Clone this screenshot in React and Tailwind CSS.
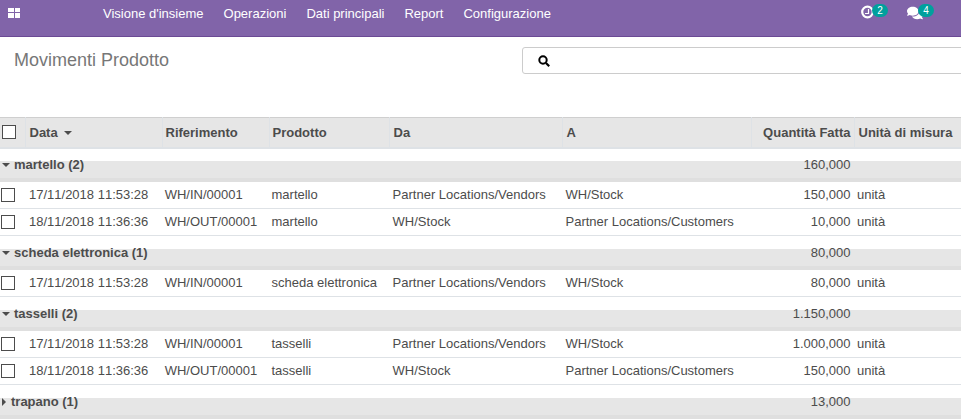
import { FaComments } from 'react-icons/fa'

const menu = ["Visione d'insieme", 'Operazioni', 'Dati principali', 'Report', 'Configurazione']

const widths = [25, 137, 107, 120, 173, 189, 103, 107]

const groups = [
    {
        name: 'martello (2)',
        total: '160,000',
        open: true,
        rows: [
            ['17/11/2018 11:53:28', 'WH/IN/00001', 'martello', 'Partner Locations/Vendors', 'WH/Stock', '150,000'],
            ['18/11/2018 11:36:36', 'WH/OUT/00001', 'martello', 'WH/Stock', 'Partner Locations/Customers', '10,000'],
        ],
    },
    {
        name: 'scheda elettronica (1)',
        total: '80,000',
        open: true,
        rows: [
            ['17/11/2018 11:53:28', 'WH/IN/00001', 'scheda elettronica', 'Partner Locations/Vendors', 'WH/Stock', '80,000'],
        ],
    },
    {
        name: 'tasselli (2)',
        total: '1.150,000',
        open: true,
        rows: [
            ['17/11/2018 11:53:28', 'WH/IN/00001', 'tasselli', 'Partner Locations/Vendors', 'WH/Stock', '1.000,000'],
            ['18/11/2018 11:36:36', 'WH/OUT/00001', 'tasselli', 'WH/Stock', 'Partner Locations/Customers', '150,000'],
        ],
    },
    { name: 'trapano (1)', total: '13,000', open: false, rows: [] },
]

function Box() {
    return <span className="block h-[14px] w-[14px] border border-[#4c4c4c] bg-white" />
}

function GroupRow({ group }) {
    return (
        <tr className="h-[34px] bg-[linear-gradient(to_bottom,#fff_13px,#e6e6e6_13px,#e6e6e6_30px,#dfdfdf_30px)]">
            <td colSpan={6} className="p-0 font-bold">
                <div className="flex items-center">
                    {group.open ? (
                        <span className="ml-[2px] mr-[4px] h-0 w-0 border-x-[4px] border-t-[4px] border-x-transparent border-t-[#4c4c4c]" />
                    ) : (
                        <span className="ml-[2px] mr-[5px] h-0 w-0 border-y-[4px] border-l-[4px] border-y-transparent border-l-[#4c4c4c]" />
                    )}
                    {group.name}
                </div>
            </td>
            <td className="p-0 pr-[3.5px] text-right">{group.total}</td>
            <td className="p-0" />
        </tr>
    )
}

function MoveRow({ row }) {
    return (
        <tr className="h-[27px] border-b border-[#dee2e6]">
            <td className="p-0 pl-[1px]">
                <Box />
            </td>
            <td className="p-0 pl-[4px] [font-kerning:none]">{row[0]}</td>
            <td className="p-0 pl-[2.7px]">{row[1]}</td>
            <td className="p-0 pl-[2.5px]">{row[2]}</td>
            <td className="p-0 pl-[3.6px]">{row[3]}</td>
            <td className="p-0 pl-[3.5px]">{row[4]}</td>
            <td className="p-0 pr-[3.5px] text-right">{row[5]}</td>
            <td className="p-0 pl-[3px]">unità</td>
        </tr>
    )
}

function GroupBlock({ group }) {
    return (
        <>
            <GroupRow group={group} />
            {group.rows.map((row, i) => (
                <MoveRow key={i} row={row} />
            ))}
        </>
    )
}

function Badge({ children }) {
    return (
        <span className="absolute left-[11px] top-[4px] flex h-[13px] w-[16px] items-center justify-center rounded-full bg-[#00a09d] text-[10px]">
            {children}
        </span>
    )
}

export default function App() {
    return (
        <div className="h-[419px] w-[961px] overflow-hidden bg-white font-['Liberation_Sans',sans-serif] text-[13px] text-[#4c4c4c]">
            <nav className="flex h-[37px] items-start border-b border-[#6b4a94] bg-[#8164a9] text-white">
                <div className="ml-[8px] mt-[8px] grid w-[12px] grid-cols-2 gap-[1px]">
                    <span className="h-[4px] bg-white" />
                    <span className="h-[4px] bg-white" />
                    <span className="h-[5px] bg-white" />
                    <span className="h-[5px] bg-white" />
                </div>
                <div className="ml-[83px] mt-[4px] flex gap-[20px]">
                    {menu.map((item) => (
                        <span key={item}>{item}</span>
                    ))}
                </div>
                <div className="relative ml-[310px] h-[36px] w-[16px]">
                    <svg viewBox="0 0 14 14" className="mt-[5px] h-[14px] w-[14px]" fill="none" stroke="white" strokeWidth="2.2">
                        <circle cx="6.5" cy="7" r="5.3" />
                        <path d="M7.5 4v4.5H4" strokeWidth="1.2" />
                    </svg>
                    <Badge>2</Badge>
                </div>
                <div className="relative ml-[30px] h-[36px] w-[16px]">
                    <FaComments size={16} className="mt-[5px]" />
                    <Badge>4</Badge>
                </div>
            </nav>
            <div className="flex h-[80px] items-start bg-white">
                <h1 className="ml-[14px] mt-[12px] shrink-0 text-[18px] leading-[22px] font-normal text-[#777]">
                    Movimenti Prodotto
                </h1>
                <div className="ml-[353px] mt-[10px] flex h-[27px] w-[500px] shrink-0 items-center rounded-[3px] border border-[#ccc] pl-[15px]">
                    <svg viewBox="0 0 12 12" className="h-[12px] w-[12px]" fill="none" stroke="black">
                        <circle cx="5" cy="5" r="3.7" strokeWidth="2" />
                        <path d="M8 8l3.2 3.2" strokeWidth="2.2" />
                    </svg>
                </div>
            </div>
            <table className="w-[961px] table-fixed border-collapse">
                <colgroup>
                    {widths.map((w, i) => (
                        <col key={i} style={{ width: w }} />
                    ))}
                </colgroup>
                <thead>
                    <tr className="h-[30px] border-t border-b-2 border-t-[#cfcfcf] border-b-[#dee2e6] bg-[#e6e6e6] text-left font-bold">
                        <th className="border-r border-[#dee2e6] p-0 pl-[2px]">
                            <Box />
                        </th>
                        <th className="border-r border-[#dee2e6] p-0 pl-[4px]">
                            Data
                            <span className="ml-[6px] inline-block border-x-[4px] border-t-[4px] border-x-transparent border-t-[#4c4c4c] align-middle" />
                        </th>
                        <th className="border-r border-[#dee2e6] p-0 pl-[3px]">Riferimento</th>
                        <th className="border-r border-[#dee2e6] p-0 pl-[3px]">Prodotto</th>
                        <th className="border-r border-[#dee2e6] p-0 pl-[4px]">Da</th>
                        <th className="border-r border-[#dee2e6] p-0 pl-[4px]">A</th>
                        <th className="border-r border-[#dee2e6] p-0 pr-[3px] text-right">Quantità Fatta</th>
                        <th className="p-0 pl-[4px]">Unità di misura</th>
                    </tr>
                </thead>
                <tbody>
                    {groups.map((group) => (
                        <GroupBlock key={group.name} group={group} />
                    ))}
                </tbody>
            </table>
        </div>
    )
}
